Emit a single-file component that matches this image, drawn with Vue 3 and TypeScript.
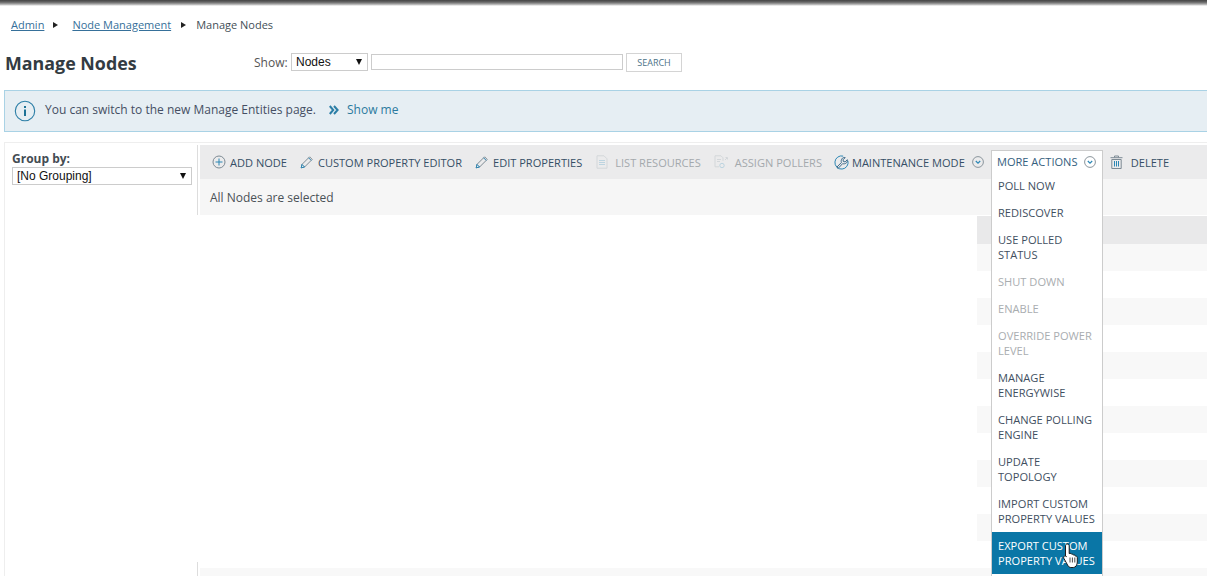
<script setup lang="ts">
interface Tool { label: string; icon: string; off?: boolean }
const tools: Tool[] = [
  { label: 'ADD NODE', icon: 'plus' },
  { label: 'CUSTOM PROPERTY EDITOR', icon: 'pencil' },
  { label: 'EDIT PROPERTIES', icon: 'pencil' },
  { label: 'LIST RESOURCES', icon: 'list', off: true },
  { label: 'ASSIGN POLLERS', icon: 'assign', off: true },
  { label: 'MAINTENANCE MODE', icon: 'wrench' },
]
const menu: { label: string; off?: boolean; active?: boolean }[] = [
  { label: 'POLL NOW' },
  { label: 'REDISCOVER' },
  { label: 'USE POLLED STATUS' },
  { label: 'SHUT DOWN', off: true },
  { label: 'ENABLE', off: true },
  { label: 'OVERRIDE POWER LEVEL', off: true },
  { label: 'MANAGE ENERGYWISE' },
  { label: 'CHANGE POLLING ENGINE' },
  { label: 'UPDATE TOPOLOGY' },
  { label: 'IMPORT CUSTOM PROPERTY VALUES' },
  { label: 'EXPORT CUSTOM PROPERTY VALUES', active: true },
]
const stripes = Array.from({ length: 12 }, (_, i) => i)
</script>

<template>
  <div class="page">
    <div class="topbar"></div>
    <nav class="crumbs">
      <a>Admin</a><i class="tri first"></i><a>Node Management</a><i class="tri"></i><span>Manage Nodes</span>
    </nav>
    <div class="head">
      <h1>Manage Nodes</h1>
      <div class="show">
        <label>Show:</label>
        <div class="sel nodes"><span>Nodes</span><i class="down"></i></div>
        <div class="search"></div>
        <div class="btn">SEARCH</div>
      </div>
    </div>
    <div class="info">
      <svg width="22" height="22" viewBox="0 0 22 22" class="info-ic">
        <circle cx="11" cy="11" r="9.7" fill="none" stroke="#2b7ea6" stroke-width="1.1" />
        <rect x="10" y="9.5" width="2" height="6.5" fill="#1d7296" />
        <rect x="10" y="6" width="2" height="2" fill="#1d7296" />
      </svg>
      <span class="info-text">You can switch to the new Manage Entities page.</span>
      <svg width="10" height="10" viewBox="0 0 10 10" class="chev">
        <path d="M.8 1l3.4 4-3.4 4M5 1l3.6 4L5 9" fill="none" stroke="#2b7ea6" stroke-width="2" />
      </svg>
      <a class="show-me">Show me</a>
    </div>
    <div class="main">
      <aside class="side">
        <div class="group-lbl">Group by:</div>
        <div class="sel grouping"><span>[No Grouping]</span><i class="down"></i></div>
      </aside>
      <section class="content">
        <div class="top">
          <div class="toolbar">
            <div v-for="t in tools" :key="t.label" class="tool" :class="[{ off: t.off }, 't-' + t.icon]">
              <svg v-if="t.icon === 'plus'" width="14" height="14" viewBox="0 0 14 14">
                <circle cx="7" cy="7" r="6" fill="none" stroke="#7d8a94" />
                <path d="M7 3.5v7M3.5 7h7" stroke="#2b86b4" />
              </svg>
              <svg v-else-if="t.icon === 'pencil'" width="14" height="14" viewBox="0 0 14 14">
                <path d="M1.2 12.8l.8-3.4L9.6 1.8l2.6 2.6-7.6 7.6z" fill="none" stroke="#7d8a94" />
                <path d="M8.6 2.8l2.6 2.6M1.2 12.8l.8-3.4 2.6 2.6z" fill="none" stroke="#2b86b4" />
              </svg>
              <svg v-else-if="t.icon === 'list'" width="12" height="14" viewBox="0 0 12 14">
                <path d="M1 .8h7l3 3v9.4H1z" fill="none" stroke="#d3d7da" />
                <path d="M3 5.5h6M3 7.5h6M3 9.5h6" stroke="#bcd4e0" />
              </svg>
              <svg v-else-if="t.icon === 'assign'" width="14" height="14" viewBox="0 0 14 14">
                <path d="M1 .8h6l2 2v3M1 .8v11h4" fill="none" stroke="#d3d7da" />
                <path d="M3 4.5h4M3 6.5h3" stroke="#d3d7da" />
                <circle cx="8" cy="10.5" r="2.2" fill="none" stroke="#bcd4e0" />
                <path d="M11 5l2-2M11.5 2.5h2v2" fill="none" stroke="#d3d7da" />
              </svg>
              <svg v-else width="15" height="15" viewBox="0 0 15 15">
                <path d="M9.2 1.1A6.6 6.6 0 1 0 13.9 5.8" fill="none" stroke="#2b86b4" />
                <path d="M2.8 12.2l4.6-4.7C6.6 5 8.2 1.9 11.2 2.6L9 4.8l.4 1.7 1.7.4L13.3 4.7c.7 3-2.4 4.8-4.6 3.9l-4.6 4.8z" fill="none" stroke="#3d6a8a" stroke-width="1" />
              </svg>
              <span>{{ t.label }}</span>
            </div>
            <svg class="caret" width="12" height="12" viewBox="0 0 12 12">
              <circle cx="6" cy="6" r="5.4" fill="none" stroke="#8b959c" />
              <path d="M3.8 5l2.2 2.2L8.2 5" fill="none" stroke="#2b86b4" stroke-width="1.2" />
            </svg>
            <div class="delete">
              <svg width="13" height="14" viewBox="0 0 13 14">
                <path d="M.5 2.7h12M4.5 2.5V1h4v1.5M1.8 4.5v9h9.4v-9z" fill="none" stroke="#7d8a94" />
                <path d="M4.5 6v5.5M6.5 6v5.5M8.5 6v5.5" stroke="#2b86b4" />
              </svg>
              <span>DELETE</span>
            </div>
          </div>
          <div class="selected">All Nodes are selected</div>
        </div>
        <div class="grid">
          <div class="grid-head"></div>
          <div v-for="i in stripes" :key="i" class="row" :class="{ alt: i % 2 === 0 }"></div>
        </div>
        <div class="tail"><div class="tail-row"></div></div>
      </section>
    </div>
    <div class="more">
      <div class="more-head">
        <span>MORE ACTIONS</span>
        <svg width="12" height="12" viewBox="0 0 12 12">
          <circle cx="6" cy="6" r="5.4" fill="none" stroke="#8b959c" />
          <path d="M3.8 5l2.2 2.2L8.2 5" fill="none" stroke="#2b86b4" stroke-width="1.2" />
        </svg>
      </div>
      <div v-for="m in menu" :key="m.label" class="item" :class="{ off: m.off, active: m.active }">{{ m.label }}</div>
      <svg class="cursor" width="16" height="25" viewBox="0 0 16 25">
        <path d="M4.2 1c1.3 0 2 .9 2 2v7.6l1-.2c.8-.1 1.4.3 1.6.9.8-.3 1.5 0 1.8.8.8-.3 1.6.1 1.8 1 1-.2 1.9.5 1.9 1.5v4.4c0 2.9-1.6 5.5-4 5.5H7.8c-1.5 0-2.4-1.1-3.2-2.4L1 15.6c-.6-1-.3-2 .4-2.5.8-.5 1.6-.2 2.1.5l-1-.6V3c0-1.1.4-2 1.7-2z" fill="#fff" stroke="#1a1a1a" stroke-width="1" />
        <path d="M7 14.5v5M9.4 14.5v5M11.8 14.5v5" stroke="#1a1a1a" stroke-width=".8" />
      </svg>
    </div>
  </div>
</template>

<style>
html, body { margin: 0; background: #fff; overflow: hidden; }
</style>

<style scoped>
.page {
  position: relative;
  width: 1207px;
  height: 576px;
  overflow: hidden;
  background: #fff;
  font-family: "Open Sans", "DejaVu Sans", sans-serif;
  font-size: 12px;
  color: #3f4952;
}
.topbar {
  height: 6px;
  background: linear-gradient(#444 0, #666 35%, #aaa 70%, #fff 100%);
}
.crumbs {
  display: flex;
  align-items: center;
  height: 16px;
  margin-top: 10px;
  padding-left: 11px;
  font-size: 11px;
}
.crumbs a { color: #36709a; text-decoration: underline; }
.crumbs span { color: #444f57; }
.tri {
  width: 0;
  height: 0;
  margin: 1px 10px 0 10px;
  border-left: 5px solid #222;
  border-top: 3.5px solid transparent;
  border-bottom: 3.5px solid transparent;
}
.tri.first { margin: 1px 14px 0 9px; }
.head {
  display: flex;
  align-items: flex-start;
  height: 40px;
  margin-top: 18px;
  padding-left: 5px;
}
h1 {
  width: 249px;
  margin: 0;
  font-size: 17.85px;
  line-height: 26px;
  font-weight: 700;
  color: #333b42;
}
.show { display: flex; align-items: center; height: 20px; margin-top: 2px; }
.show label { width: 37px; font-size: 12px; color: #555; }
.sel {
  position: relative;
  box-sizing: border-box;
  display: flex;
  align-items: center;
  background: #fff;
  border: 1px solid #ccc;
  font-family: "Liberation Sans", Arial, sans-serif;
  color: #111;
}
.nodes { width: 77px; height: 18px; font-size: 12px; padding-left: 4px; }
.down {
  position: absolute;
  right: 5px;
  top: 5px;
  width: 0;
  height: 0;
  border-top: 6px solid #111;
  border-left: 3.5px solid transparent;
  border-right: 3.5px solid transparent;
}
.search {
  box-sizing: border-box;
  width: 252px;
  height: 16px;
  margin-left: 3px;
  border: 1px solid #ccc;
}
.btn {
  box-sizing: border-box;
  width: 56px;
  height: 19px;
  margin-left: 3px;
  border: 1px solid #d4d4d4;
  text-align: center;
  line-height: 17px;
  font-size: 9px;
  color: #4c7287;
}
.info {
  box-sizing: border-box;
  display: flex;
  align-items: center;
  height: 42px;
  margin-left: 4px;
  background: #e6eef3;
  border-top: 1px solid #a9d2e5;
  border-bottom: 1px solid #a9d2e5;
  border-left: 1px solid #a9d2e5;
}
.info-ic { margin-left: 9px; }
.info-text { margin-left: 9px; padding-bottom: 3px; font-size: 12px; color: #454e63; }
.chev { margin: 0 0 3px 13px; }
.show-me { margin-left: 8px; padding-bottom: 3px; font-size: 12px; color: #2b7a9e; }
.main {
  display: flex;
  height: 434px;
  margin-top: 10px;
  margin-left: 4px;
  border-top: 1px solid #eee;
  border-left: 1px solid #eee;
}
.side { box-sizing: border-box; width: 192px; height: 100%; padding: 8px 0 0 7px; }
.group-lbl { font-size: 12px; font-weight: 700; color: #444c53; line-height: 15px; }
.grouping { width: 180px; height: 18px; margin-top: 1px; font-size: 12px; padding-left: 4px; }
.content {
  flex: 1;
  min-width: 0;
  height: 100%;
  padding-top: 2px;
  box-sizing: border-box;
  display: flex;
  flex-direction: column;
}
.top { border-left: 1px solid #ddd; padding-left: 2px; }
.toolbar {
  display: flex;
  align-items: center;
  height: 34px;
  padding-left: 12px;
  background: #ebebec;
}
.tool {
  display: flex;
  align-items: center;
  gap: 4px;
  margin-right: 13px;
  font-size: 11.05px;
  color: #364f66;
  white-space: nowrap;
}
.tool.off { color: #a4a9ad; gap: 7px; }
.tool.t-list { margin-left: 1px; }
.tool.t-wrench { margin-left: -1px; gap: 3px; }
.caret { margin-left: -6px; }
.delete {
  display: flex;
  align-items: center;
  gap: 8px;
  margin-left: 126px;
  font-size: 11.05px;
  color: #364f66;
}
.selected {
  height: 36px;
  padding-left: 10px;
  line-height: 38px;
  font-size: 12px;
  background: #f6f6f6;
  color: #4a5157;
}
.grid { align-self: flex-end; width: 230px; margin-top: 1px; }
.grid-head { height: 28px; background: #e9e9ea; }
.row { height: 27px; }
.row.alt { background: #f8f8f8; }
.tail {
  flex: 1;
  margin-top: -6px;
  padding: 6px 0 0 2px;
  border-left: 1px solid #ddd;
}
.tail-row { height: 100%; background: #f8f8f8; }
.more {
  position: absolute;
  left: 991px;
  top: 150px;
  box-sizing: border-box;
  width: 112px;
  height: 440px;
  background: #fff;
  border: 1px solid #ccc;
}
.more-head {
  display: flex;
  align-items: center;
  justify-content: space-between;
  height: 21px;
  padding: 0 6px 0 5px;
  font-size: 11.05px;
  color: #35607e;
}
.item {
  padding: 6px 5px 6px 6px;
  font-size: 11.1px;
  line-height: 15px;
  color: #3f4f5f;
}
.item.off { color: #a9adb0; }
.item.active { background: #0a76a6; color: #fff; }
.cursor { position: absolute; left: 71px; top: 392px; }
</style>
